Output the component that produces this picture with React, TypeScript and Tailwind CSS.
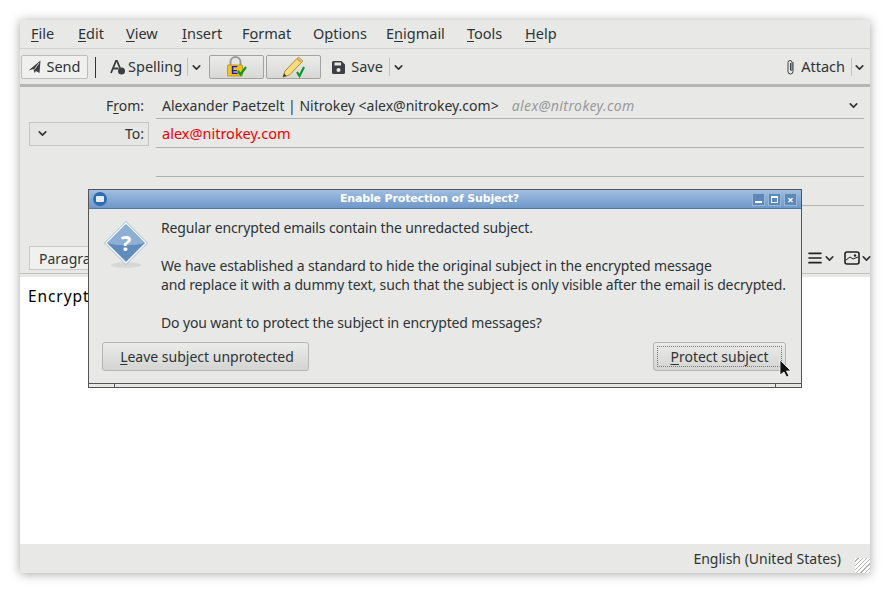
import { ChevronDown, AlignJustify } from "lucide-react";

const font = { fontFamily: '"Noto Sans", sans-serif' };

function Mnemonic({ before = "", u, after = "" }: { before?: string; u: string; after?: string }) {
  return (
    <span>
      {before}
      <span className="underline underline-offset-2">{u}</span>
      {after}
    </span>
  );
}

function Chevron({ className = "" }: { className?: string }) {
  return <ChevronDown size={13} strokeWidth={3} className={`text-[#333] ${className}`} />;
}

function ToggleButton({ children }: { children: React.ReactNode }) {
  return (
    <div className="flex h-[24px] w-[55px] items-center justify-center rounded-[2px] border border-[#a3a3a2] bg-gradient-to-b from-[#ebebea] to-[#d8d8d7]">
      {children}
    </div>
  );
}

function LockIcon() {
  return (
    <svg width="22" height="22" viewBox="0 0 22 22">
      <path d="M4.500 10V6a5 5 0 0 1 10 0v4" fill="none" stroke="#9a9a9a" strokeWidth="2" />
      <rect x="1.500" y="9" width="15" height="11" rx="0.500" fill="#f0c419" stroke="#a98a10" strokeWidth="0.700" />
      <text x="5" y="18" fontSize="10" fontWeight="700" fill="#1515d8" fontFamily="Liberation Sans">E</text>
      <path d="M12 15l2.500 3.500L20 11" fill="none" stroke="#0a9a2a" strokeWidth="2.200" />
    </svg>
  );
}

function PencilIcon() {
  return (
    <svg width="24" height="22" viewBox="0 0 24 22">
      <path d="M1 21l2-6L15 2.500l4.500 4L7.500 19z" fill="#f6dc7c" stroke="#b58a2a" strokeWidth="1" />
      <path d="M15 2.500l1.500-1.500 4.500 4-1.500 1.500z" fill="#efb9a0" stroke="#b58a2a" strokeWidth="0.800" />
      <path d="M1 21l1-3.500 2.500 2.500z" fill="#333" />
      <path d="M15 16l2.500 4L22 11" fill="none" stroke="#0a9a2a" strokeWidth="2.200" />
    </svg>
  );
}

function QuestionIcon() {
  return (
    <svg width="44" height="48" viewBox="0 0 44 48">
      <ellipse cx="22" cy="44" rx="15" ry="3" fill="#000" opacity="0.07" />
      <path d="M22 1.500L42.500 22 22 42.500 1.500 22z" fill="#5f8cbd" stroke="#fff" strokeWidth="2.200" strokeLinejoin="round" />
      <path d="M22 3.500L40.500 22c-8 3-29 3-37 0z" fill="#8cafd3" />
      <path d="M22 0.500L43.500 22 22 43.500 0.500 22z" fill="none" stroke="#6d93bd" strokeWidth="0.700" strokeLinejoin="round" />
      <text x="22" y="30" textAnchor="middle" fontSize="22" fontWeight="700" fill="#fff" fontFamily="Noto Sans">?</text>
    </svg>
  );
}

function WinButton({ children }: { children: React.ReactNode }) {
  return (
    <div className="flex h-[13px] w-[13px] items-center justify-center bg-[#5c87bb] shadow-[inset_0_0_0_1px_#9ab7d8]">
      {children}
    </div>
  );
}

function Dialog() {
  return (
    <div className="absolute left-[88px] top-[189px] h-[199px] w-[714px] border border-[#555] bg-[#e8e8e7]">
      <div className="relative flex h-[19px] items-center justify-center border-b border-[#4f78ab] bg-gradient-to-b from-[#a0bee0] to-[#6f98c9] pr-[31px]">
        <div className="absolute left-[4px] top-[2px] h-[14px] w-[14px] rounded-full bg-[#2f6db0]">
          <div className="ml-[3px] mt-[4px] h-[6px] w-[8px] rounded-[1px] bg-[#e6edf5]" />
        </div>
        <span className="text-[11px] font-bold tracking-[-0.15px] text-white" style={{ fontFamily: '"DejaVu Sans", sans-serif' }}>
          Enable Protection of Subject?
        </span>
        <div className="absolute right-[4px] top-[3px] flex gap-[3px]">
          <WinButton><div className="mt-[5px] h-[2px] w-[7px] bg-white" /></WinButton>
          <WinButton><div className="h-[7px] w-[7px] border border-t-2 border-white" /></WinButton>
          <WinButton><span className="text-[11px] font-bold leading-none text-white">×</span></WinButton>
        </div>
      </div>
      <div className="flex pl-[15px] pt-[12px]">
        <div className="w-[57px] shrink-0">
          <QuestionIcon />
        </div>
        <div className="mt-[-3px] text-[14px] leading-[19px] tracking-[-0.13px] text-[#2e3436]">
          <p>Regular encrypted emails contain the unredacted subject.</p>
          <p className="mt-[19px]">We have established a standard to hide the original subject in the encrypted message</p>
          <p>and replace it with a dummy text, such that the subject is only visible after the email is decrypted.</p>
          <p className="mt-[19px]">Do you want to protect the subject in encrypted messages?</p>
        </div>
      </div>
      <div className="mt-[8px] flex justify-between px-[13px] pt-[2px] text-[14px] text-[#2e3436]">
        <div className="flex h-[29px] w-[207px] items-center justify-center rounded-[3px] border border-[#b5b5b4] bg-gradient-to-b from-[#ebebea] to-[#d4d4d3] pl-[3px]">
          <Mnemonic u="L" after="eave subject unprotected" />
        </div>
        <div className="mr-[2px] flex h-[29px] w-[133px] items-center justify-center rounded-[3px] border border-[#b5b5b4] bg-gradient-to-b from-[#ebebea] to-[#d4d4d3] p-[3px]">
          <div className="flex h-full w-full items-center justify-center border border-dotted border-[#777]">
            <Mnemonic u="P" after="rotect subject" />
          </div>
        </div>
      </div>
      <div className="absolute bottom-0 left-0 right-0 flex h-[4px] justify-between border-t border-[#555] bg-[#e8e8e7] px-[25px]">
        <div className="w-px bg-[#555]" />
        <div className="w-px bg-[#555]" />
      </div>
    </div>
  );
}

export default function App() {
  const menus = [
    { w: "w-[47px]", el: <Mnemonic u="F" after="ile" /> },
    { w: "w-[48px]", el: <Mnemonic u="E" after="dit" /> },
    { w: "w-[56px]", el: <Mnemonic u="V" after="iew" /> },
    { w: "w-[60px]", el: <Mnemonic u="I" after="nsert" /> },
    { w: "w-[71px]", el: <Mnemonic before="F" u="o" after="rmat" /> },
    { w: "w-[73px]", el: <Mnemonic before="O" u="p" after="tions" /> },
    { w: "w-[81px]", el: <Mnemonic before="E" u="n" after="igmail" /> },
    { w: "w-[58px]", el: <Mnemonic u="T" after="ools" /> },
    { w: "w-[40px]", el: <Mnemonic u="H" after="elp" /> },
  ];

  return (
    <div className="relative h-[593px] w-[890px] overflow-hidden bg-white p-[20px]" style={font}>
      <div className="flex h-[553px] w-[850px] flex-col bg-[#e8e8e7] text-[14px] text-[#2e3436] shadow-[0_1px_10px_rgba(0,0,0,0.35)]">
        {/* menu bar */}
        <div className="flex h-[29px] shrink-0 items-center border-b border-[#d0d0cf] pl-[11px] text-[14.500px]">
          {menus.map((m, i) => (
            <div key={i} className={m.w}>{m.el}</div>
          ))}
        </div>

        {/* toolbar */}
        <div className="flex h-[38px] shrink-0 items-center border-b-[3px] border-[#b5b5b4] pl-[1px] pr-[4px] pt-[1px] text-[14.500px]">
          <div className="flex h-[24px] w-[67px] items-center justify-center gap-[4px] rounded-[2px] border border-[#bdbdbc] bg-[#f0f0ef]">
            <svg width="14" height="14" viewBox="0 0 14 14">
              <path d="M12.500 0.500L11.500 13 8 11 6.500 13 5.500 9 0.500 10.500z" fill="#3b3f41" />
              <path d="M11 3L6.500 9.500" stroke="#f0f0ef" strokeWidth="0.800" />
            </svg>
            Send
          </div>
          <div className="ml-[7px] h-[21px] w-px bg-[#333]" />
          <svg className="ml-[14px]" width="16" height="17" viewBox="0 0 16 17">
            <path d="M1 14L6 2h1l3 7M3.500 9.500h5" fill="none" stroke="#3b3f41" strokeWidth="1.800" />
            <circle cx="11.500" cy="12" r="3.500" fill="#3b3f41" />
          </svg>
          <span className="ml-[2px]">Spelling</span>
          <div className="ml-[5px] h-[18px] w-px bg-[#c2c2c1]" />
          <Chevron className="ml-[2px]" />
          <div className="ml-[6px] flex gap-[2px]">
            <ToggleButton><LockIcon /></ToggleButton>
            <ToggleButton><PencilIcon /></ToggleButton>
          </div>
          <svg className="ml-[10px]" width="15" height="15" viewBox="0 0 15 15">
            <path d="M1 2.500A1.500 1.500 0 0 1 2.500 1h8L14 4.500v8a1.500 1.500 0 0 1-1.500 1.500h-10A1.500 1.500 0 0 1 1 12.500z" fill="#3b3f41" />
            <rect x="3.500" y="2.500" width="6.500" height="3" fill="#e8e8e7" />
            <circle cx="7.500" cy="10" r="2" fill="#e8e8e7" />
          </svg>
          <span className="ml-[5px]">Save</span>
          <div className="ml-[6px] h-[18px] w-px bg-[#c2c2c1]" />
          <Chevron className="ml-[2px]" />
          <svg className="ml-auto" width="10" height="17" viewBox="0 0 10 17">
            <path d="M7.500 3v9.500a2.500 2.500 0 0 1-5 0V3.500a2 2 0 0 1 4 0V11a.8.8 0 0 1-1.500 0V4" transform="translate(0.500 0)" fill="none" stroke="#3b3f41" strokeWidth="1" />
          </svg>
          <span className="ml-[6px]">Attach</span>
          <div className="ml-[6px] h-[18px] w-px bg-[#c2c2c1]" />
          <Chevron className="ml-[1px]" />
        </div>

        {/* address fields */}
        <div className="shrink-0 pl-[9px] pr-[6px] pt-[2px]">
          <div className="flex h-[30px] items-center">
            <div className="w-[115px] pt-[3px] text-right"><Mnemonic before="F" u="r" after="om:" /></div>
            <div className="ml-[12px] flex h-full flex-1 items-center border-b border-[#b0b0af] pl-[6px] pt-[3px]">
              <span>Alexander Paetzelt | Nitrokey &lt;alex@nitrokey.com&gt;</span>
              <span className="ml-[13px] text-[14px] italic tracking-[0.4px] text-[#9a9a99]">alex@nitrokey.com</span>
              <Chevron className="ml-auto mr-[4px]" />
            </div>
          </div>
          <div className="flex h-[29px] items-center">
            <div className="flex h-[24px] w-[120px] items-center justify-between border border-[#c4c4c3] bg-[#e6e6e5] pl-[6px] pr-[4px]">
              <Chevron />
              <span>To:</span>
            </div>
            <div className="ml-[7px] flex h-full flex-1 items-center border-b border-[#b0b0af] pl-[6px] pt-[1px] text-[14.500px] text-[#f00000]">
              alex@nitrokey.com
            </div>
          </div>
          <div className="ml-[127px] h-[29px] border-b border-[#b0b0af]" />
          <div className="ml-[127px] h-[29px] border-b border-[#b0b0af]" />
        </div>

        {/* format bar */}
        <div className="mt-[37px] flex h-[31px] shrink-0 items-center justify-between border-b border-[#c0c0bf] pl-[9px]">
          <div className="flex h-[24px] w-[120px] items-center border border-[#c8c8c7] bg-[#f0f0ef] pl-[9px]">Paragraph</div>
          <div className="flex items-center">
            <AlignJustify size={16} strokeWidth={2.500} className="text-[#222]" />
            <Chevron className="mr-[8px]" />
            <svg width="16" height="14" viewBox="0 0 16 14">
              <rect x="1" y="1" width="14" height="12" rx="2" fill="none" stroke="#222" strokeWidth="1.600" />
              <path d="M2 9l4-3 3 2 5-2" fill="none" stroke="#222" strokeWidth="1" />
              <circle cx="11" cy="4.500" r="1.200" fill="#222" />
            </svg>
            <Chevron className="mr-[-3px]" />
          </div>
        </div>

        {/* body */}
        <div className="mt-[3px] flex-1 bg-white pl-[8px] pt-[8px] text-[15.500px] tracking-[0.9px] text-black">Encrypted</div>

        {/* status bar */}
        <div className="relative flex h-[29px] shrink-0 items-center justify-end pr-[29px]">
          English (United States)
          <div
            className="absolute bottom-0 right-0 h-[15px] w-[15px] bg-white"
            style={{ backgroundImage: "repeating-linear-gradient(135deg, transparent 0 2px, #b5b5b4 2px 3px)" }}
          />
        </div>
      </div>

      <Dialog />

      {/* mouse pointer */}
      <svg className="absolute left-[779px] top-[359px]" width="13" height="20" viewBox="0 0 13 20">
        <path d="M1 1v15l4-3 2.500 5 2.500-1-2.500-5H12z" fill="#111" stroke="#fff" strokeWidth="0.800" />
      </svg>
    </div>
  );
}
